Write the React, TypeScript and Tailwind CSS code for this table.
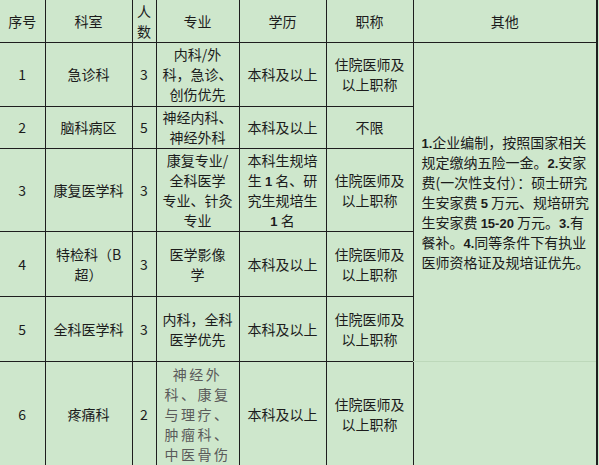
import React from "react";

const B = ({ children }: { children: React.ReactNode }) => (
  <span className="font-bold font-['Liberation_Sans',sans-serif] text-[13px] leading-none">{children}</span>
);

const Lines = ({ lines }: { lines: React.ReactNode[] }) => (
  <div>
    {lines.map((l, i) => (
      <div key={i} className="whitespace-nowrap h-[20px]">
        {l}
      </div>
    ))}
  </div>
);

export default function App() {
  const td = "border border-[#1e1e1e] text-center align-middle p-0";
  const first = "border border-l-0 border-[#1e1e1e] text-center align-middle p-0";
  const rows: {
    n: string;
    dept: React.ReactNode[];
    num: string;
    major: React.ReactNode[];
    edu: React.ReactNode[];
    title: React.ReactNode[];
    h: string;
  }[] = [
    {
      n: "1",
      dept: ["急诊科"],
      num: "3",
      major: ["内科/外", "科，急诊、", "创伤优先"],
      edu: ["本科及以上"],
      title: ["住院医师及", "以上职称"],
      h: "h-[64px]",
    },
    {
      n: "2",
      dept: ["脑科病区"],
      num: "5",
      major: ["神经内科、", "神经外科"],
      edu: ["本科及以上"],
      title: ["不限"],
      h: "h-[42px]",
    },
    {
      n: "3",
      dept: ["康复医学科"],
      num: "3",
      major: ["康复专业/", "全科医学", "专业、针灸", "专业"],
      edu: [
        "本科生规培",
        <>
          生 <B>1</B> 名、研
        </>,
        "究生规培生",
        <>
          <B>1</B> 名
        </>,
      ],
      title: ["住院医师及", "以上职称"],
      h: "h-[83px]",
    },
    {
      n: "4",
      dept: ["特检科（B", "超）"],
      num: "3",
      major: ["医学影像", "学"],
      edu: ["本科及以上"],
      title: ["住院医师及", "以上职称"],
      h: "h-[65px]",
    },
    {
      n: "5",
      dept: ["全科医学科"],
      num: "3",
      major: ["内科，全科", "医学优先"],
      edu: ["本科及以上"],
      title: ["住院医师及", "以上职称"],
      h: "h-[65px]",
    },
  ];

  return (
    <div className="w-[599px] h-[465px] overflow-hidden bg-[#cee7cc] font-['Noto_Sans_CJK_SC',sans-serif] text-[14px] leading-[20px] text-[#1c1c1c]">
      <table className="table-fixed border-collapse w-[597px]">
        <colgroup>
          <col className="w-[45px]" />
          <col className="w-[87px]" />
          <col className="w-[24px]" />
          <col className="w-[83px]" />
          <col className="w-[87px]" />
          <col className="w-[87px]" />
          <col className="w-[184px]" />
        </colgroup>
        <tbody>
          <tr className="h-[42px]">
            <td className={first + " border-t-0"}>序号</td>
            <td className={td + " border-t-0"}>科室</td>
            <td className={td + " border-t-0"}>
              <Lines lines={["人", "数"]} />
            </td>
            <td className={td + " border-t-0"}>专业</td>
            <td className={td + " border-t-0"}>学历</td>
            <td className={td + " border-t-0"}>职称</td>
            <td className={td + " border-t-0 border-r-2"}>其他</td>
          </tr>
          {rows.map((r, i) => (
            <tr key={r.n} className={r.h}>
              <td className={first}>{r.n}</td>
              <td className={td}>
                <Lines lines={r.dept} />
              </td>
              <td className={td}>{r.num}</td>
              <td className={td}>
                <Lines lines={r.major} />
              </td>
              <td className={td}>
                <Lines lines={r.edu} />
              </td>
              <td className={td}>
                <Lines lines={r.title} />
              </td>
              {i === 0 && (
                <td
                  rowSpan={5}
                  className="border border-[#1e1e1e] border-r-2 border-b-[#bdd8ba] align-middle text-left pl-[8px] pr-0 py-0"
                >
                  <Lines
                    lines={[
                      <>
                        <B>1.</B>企业编制，按照国家相关
                      </>,
                      <>
                        规定缴纳五险一金。<B>2.</B>安家
                      </>,
                      "费(一次性支付）：硕士研究",
                      <>
                        生安家费 <B>5</B> 万元、规培研究
                      </>,
                      <>
                        生安家费 <B>15-20</B> 万元。<B>3.</B>有
                      </>,
                      <>
                        餐补。<B>4.</B>同等条件下有执业
                      </>,
                      "医师资格证及规培证优先。",
                    ]}
                  />
                </td>
              )}
            </tr>
          ))}
          <tr className="h-[105px]">
            <td className={first}>6</td>
            <td className={td}>疼痛科</td>
            <td className={td}>2</td>
            <td className={td + " text-[#5a5a5a] tracking-[2.5px]"}>
              <Lines lines={["神经外", "科、康复", "与理疗、", "肿瘤科、", "中医骨伤"]} />
            </td>
            <td className={td}>本科及以上</td>
            <td className={td}>
              <Lines lines={["住院医师及", "以上职称"]} />
            </td>
            <td className="border border-[#1e1e1e] border-r-2 border-t-[#bdd8ba]"></td>
          </tr>
        </tbody>
      </table>
    </div>
  );
}
